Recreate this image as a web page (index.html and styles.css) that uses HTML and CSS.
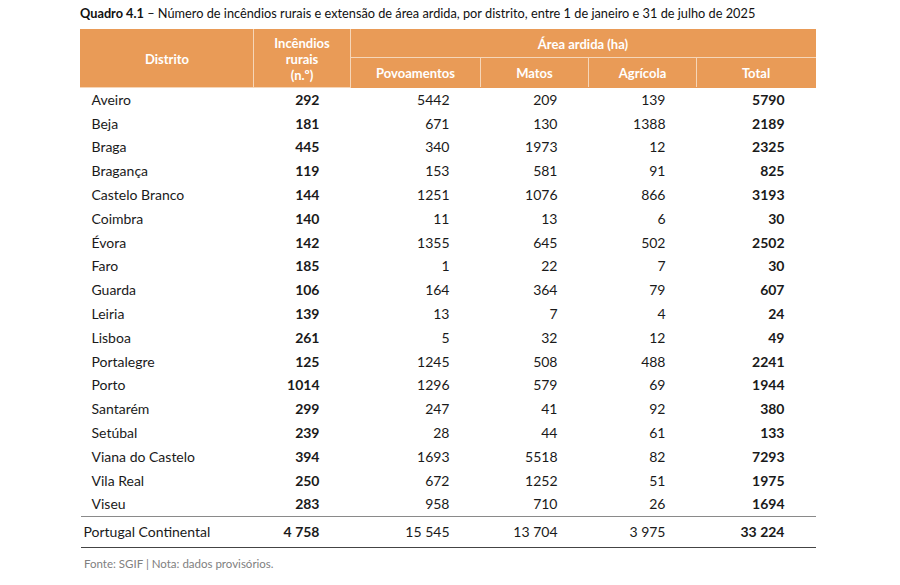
FILE: index.html
```html
<!DOCTYPE html>
<html lang="pt">
<head>
<meta charset="utf-8">
<link rel="stylesheet" href="styles.css">
</head>
<body>
<div class="page">
  <p class="caption"><b>Quadro 4.1</b> – Número de incêndios rurais e extensão de área ardida, por distrito, entre 1 de janeiro e 31 de julho de 2025</p>
  <table class="data">
    <colgroup>
      <col class="c-dist"><col class="c-inc"><col class="c-pov"><col class="c-mat"><col class="c-agr"><col class="c-tot">
    </colgroup>
    <thead>
      <tr class="h1">
        <th rowspan="2">Distrito</th>
        <th rowspan="2">Incêndios<br>rurais<br>(n.º)</th>
        <th colspan="4">Área ardida (ha)</th>
      </tr>
      <tr class="h2">
        <th>Povoamentos</th><th>Matos</th><th>Agrícola</th><th>Total</th>
      </tr>
    </thead>
    <tbody>
      <tr><td>Aveiro</td><td class="b">292</td><td>5442</td><td>209</td><td>139</td><td class="b">5790</td></tr>
      <tr><td>Beja</td><td class="b">181</td><td>671</td><td>130</td><td>1388</td><td class="b">2189</td></tr>
      <tr><td>Braga</td><td class="b">445</td><td>340</td><td>1973</td><td>12</td><td class="b">2325</td></tr>
      <tr><td>Bragança</td><td class="b">119</td><td>153</td><td>581</td><td>91</td><td class="b">825</td></tr>
      <tr><td>Castelo Branco</td><td class="b">144</td><td>1251</td><td>1076</td><td>866</td><td class="b">3193</td></tr>
      <tr><td>Coimbra</td><td class="b">140</td><td>11</td><td>13</td><td>6</td><td class="b">30</td></tr>
      <tr><td>Évora</td><td class="b">142</td><td>1355</td><td>645</td><td>502</td><td class="b">2502</td></tr>
      <tr><td>Faro</td><td class="b">185</td><td>1</td><td>22</td><td>7</td><td class="b">30</td></tr>
      <tr><td>Guarda</td><td class="b">106</td><td>164</td><td>364</td><td>79</td><td class="b">607</td></tr>
      <tr><td>Leiria</td><td class="b">139</td><td>13</td><td>7</td><td>4</td><td class="b">24</td></tr>
      <tr><td>Lisboa</td><td class="b">261</td><td>5</td><td>32</td><td>12</td><td class="b">49</td></tr>
      <tr><td>Portalegre</td><td class="b">125</td><td>1245</td><td>508</td><td>488</td><td class="b">2241</td></tr>
      <tr><td>Porto</td><td class="b">1014</td><td>1296</td><td>579</td><td>69</td><td class="b">1944</td></tr>
      <tr><td>Santarém</td><td class="b">299</td><td>247</td><td>41</td><td>92</td><td class="b">380</td></tr>
      <tr><td>Setúbal</td><td class="b">239</td><td>28</td><td>44</td><td>61</td><td class="b">133</td></tr>
      <tr><td>Viana do Castelo</td><td class="b">394</td><td>1693</td><td>5518</td><td>82</td><td class="b">7293</td></tr>
      <tr><td>Vila Real</td><td class="b">250</td><td>672</td><td>1252</td><td>51</td><td class="b">1975</td></tr>
      <tr class="last"><td>Viseu</td><td class="b">283</td><td>958</td><td>710</td><td>26</td><td class="b">1694</td></tr>
    </tbody>
    <tfoot>
      <tr><td>Portugal Continental</td><td class="b">4 758</td><td>15 545</td><td>13 704</td><td>3 975</td><td class="b">33 224</td></tr>
    </tfoot>
  </table>
  <p class="note">Fonte: SGIF | Nota: dados provisórios.</p>
</div>
</body>
</html>
```
FILE: styles.css
```css
html, body {
  margin: 0;
  padding: 0;
  background: #ffffff;
}
body {
  font-family: "Lato", "Open Sans", sans-serif;
  color: #1a1a1a;
}
.page {
  padding: 5px 0 0 80px;
}
.caption {
  margin: 0;
  font-size: 12.75px;
  line-height: 16px;
  color: #111;
}
.caption b {
  font-weight: 700;
}
.data {
  margin-top: 8px;
  width: 735px;
  border-collapse: collapse;
  table-layout: fixed;
  font-size: 14px;
}
.c-dist { width: 173px; }
.c-inc { width: 97px; }
.c-pov { width: 130px; }
.c-mat { width: 108px; }
.c-agr { width: 108px; }
.c-tot { width: 119px; }

.data th {
  background: #e99b57;
  color: #ffffff;
  font-weight: 700;
  font-size: 13px;
  border: 1px solid #f6d6b8;
  padding: 0;
  text-align: center;
  line-height: 16px;
}
.data thead tr:first-child th { border-top-color: #e99b57; }
.data thead th:first-child { border-left-color: #e99b57; }
.data thead tr th:last-child { border-right-color: #e99b57; }
.data thead tr:last-child th { border-bottom-color: #e99b57; }
.h1 th { height: 27px; }
.h2 th { height: 29px; }

.data td {
  height: 23.8px;
  padding: 0 31px 0 11px;
  text-align: right;
  line-height: 16px;
}
.data td:first-child {
  text-align: left;
}
.data td.b {
  font-weight: 700;
}
.last td {
  border-bottom: 1px solid #8a8a8a;
}
.data tfoot td {
  height: 30px;
  border-bottom: 1px solid #444;
}
.data tfoot td:first-child {
  padding-left: 3px;
}
.note {
  margin: 9px 0 0 4px;
  font-size: 11.5px;
  color: #808080;
}
```
